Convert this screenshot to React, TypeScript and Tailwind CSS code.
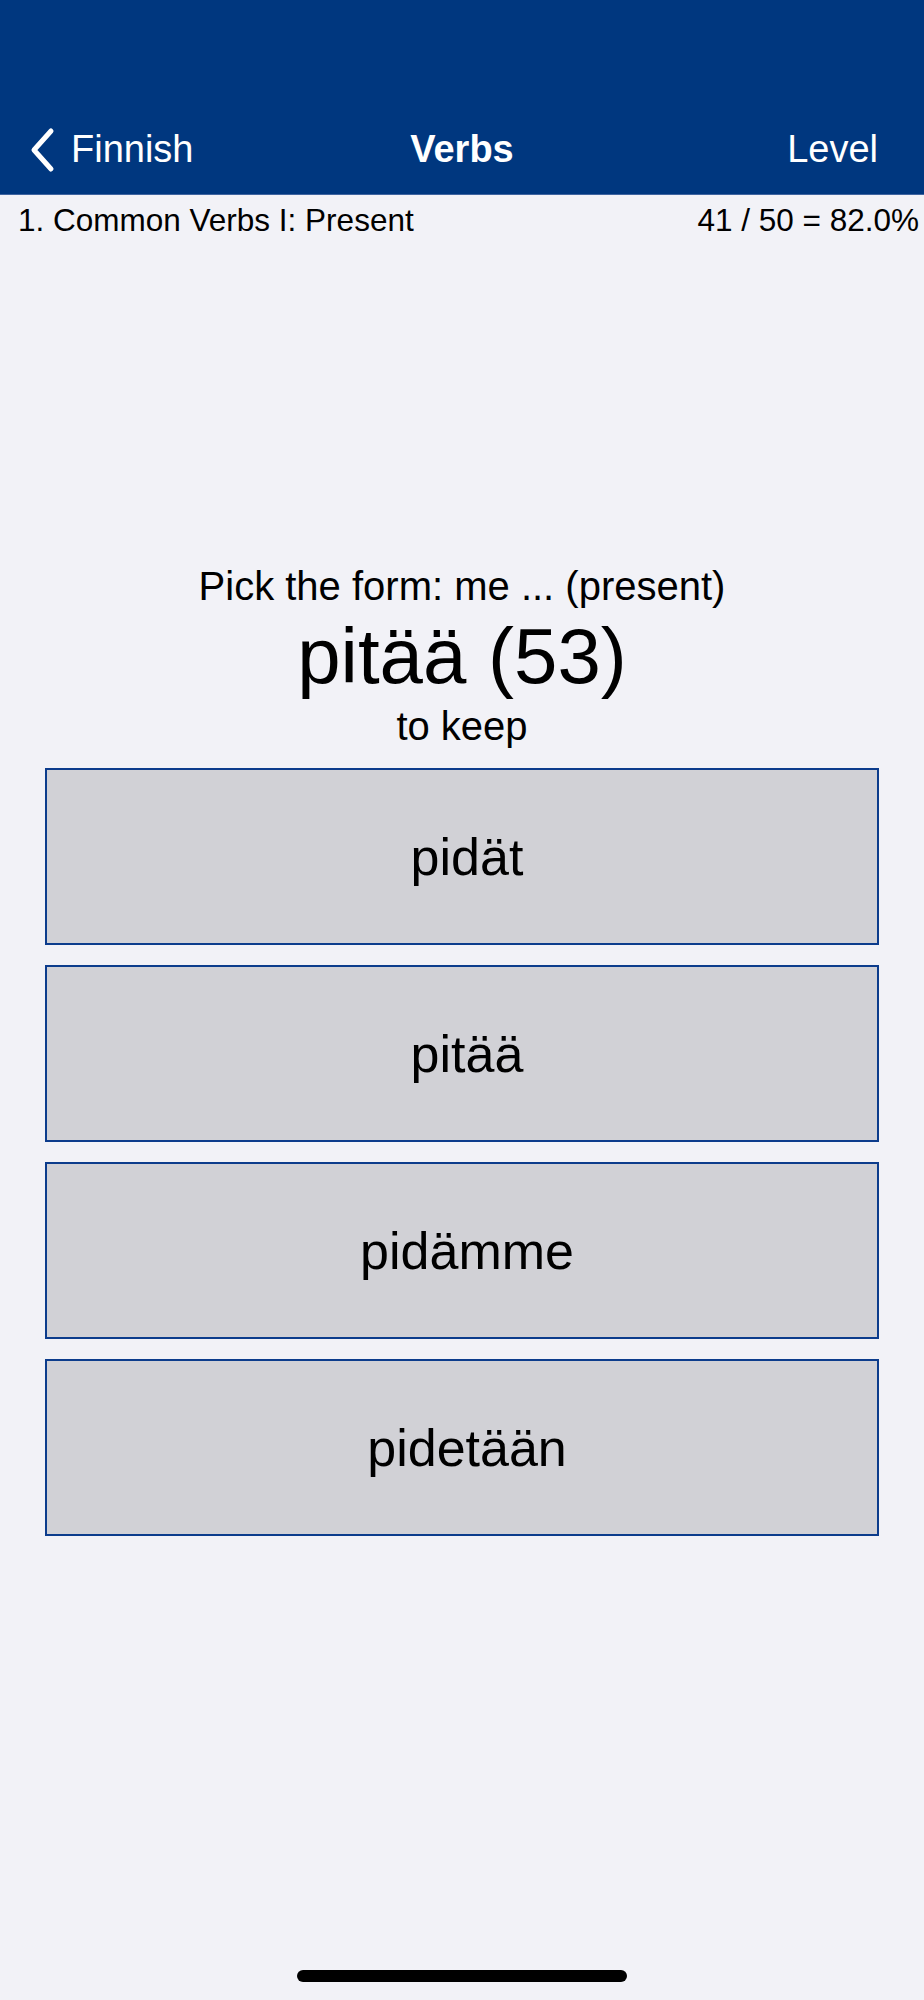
const choices = ["pidät", "pitää", "pidämme", "pidetään"];

function BackChevron() {
  return (
    <svg width="28" height="46" viewBox="0 0 28 46" fill="none">
      <path d="M23 4 L6 23 L23 42" stroke="white" strokeWidth="5" strokeLinecap="round" strokeLinejoin="round" />
    </svg>
  );
}

export default function App() {
  return (
    <div className="relative min-h-[2000px] w-full bg-[#f2f2f7] font-['Liberation_Sans',Arial,sans-serif] text-black">
      <header className="h-[195px] bg-[#00377f] pt-[105px] border-b border-[#3f64a0]">
        <div className="grid h-[89px] grid-cols-[1fr_auto_1fr] items-center px-[28px] text-[38px] text-white">
          <button className="flex items-center gap-[15px] justify-self-start">
            <BackChevron />
            <span>Finnish</span>
          </button>
          <h1 className="font-bold">Verbs</h1>
          <button className="mr-[18px] justify-self-end">Level</button>
        </div>
      </header>

      <div className="flex h-[52px] items-center justify-between pl-[18px] pr-[5px] text-[31.5px]">
        <span>1. Common Verbs I: Present</span>
        <span>41 / 50 = 82.0%</span>
      </div>

      <main className="flex flex-col items-center pt-[315px]">
        <p className="text-[40px] leading-[48px]">Pick the form: me ... (present)</p>
        <p className="text-[78px] leading-[92px]">pitää (53)</p>
        <p className="text-[40px] leading-[48px]">to keep</p>

        <div className="mt-[18px] flex w-full flex-col gap-[20px] px-[45px]">
          {choices.map((c) => (
            <button
              key={c}
              className="flex h-[177px] w-full items-center justify-center border-2 border-[#0c3c8c] bg-[#d1d1d6] pl-[10px] text-[52px]"
            >
              {c}
            </button>
          ))}
        </div>
      </main>

      <div className="absolute bottom-[18px] left-1/2 h-[12px] w-[330px] -translate-x-1/2 rounded-full bg-black" />
    </div>
  );
}
